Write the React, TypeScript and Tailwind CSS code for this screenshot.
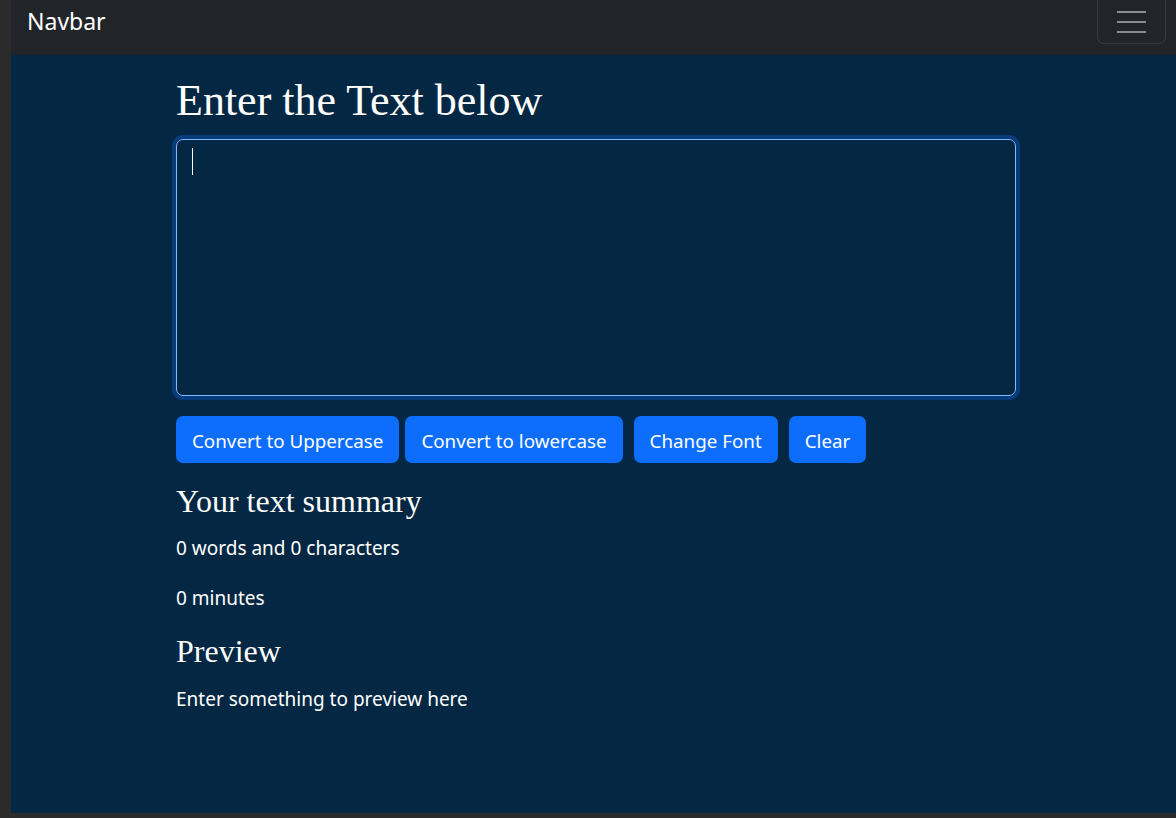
export default function App() {
  const btn =
    "h-[47px] rounded-[7px] bg-[#0d6efd] px-4 pt-[3px] text-[18.8px] leading-none text-white";

  return (
    <div className="flex h-[818px] w-[1176px] flex-col bg-[#2b2b2b] font-['Noto_Sans',sans-serif]">
      <div className="ml-[11px] flex h-[813px] flex-col">
        <nav className="flex h-[55px] items-start justify-between bg-[#212529] pr-[10px]">
          <a className="mt-[4px] ml-4 text-[23px] text-white">Navbar</a>
          <button className="flex h-[44px] w-[69px] flex-col items-center justify-center gap-[8px] rounded-b-[7px] border border-t-0 border-white/10">
            <span className="h-[2px] w-[29px] bg-[#8b8c8e]" />
            <span className="h-[2px] w-[29px] bg-[#8b8c8e]" />
            <span className="h-[2px] w-[29px] bg-[#8b8c8e]" />
          </button>
        </nav>

        <main className="flex-1 bg-[#042743] text-white">
          <div className="ml-[165px] w-[840px] pt-[19px]">
            <h1 className="mb-[12px] font-['Liberation_Serif',serif] text-[44px] leading-[53px]">
              Enter the Text below
            </h1>
            <div className="relative mb-[20px] rounded-[7px] shadow-[0_0_0_4px_rgba(13,110,253,0.3)]">
              <textarea
                className="block h-[257px] w-full resize-none rounded-[7px] border border-[#86b7fe] bg-[#042743] caret-transparent outline-none"
                defaultValue=""
              />
              <span className="absolute top-[9px] left-[16px] h-[27px] w-px bg-white" />
            </div>
            <div className="flex">
              <button className={btn}>Convert to Uppercase</button>
              <button className={`${btn} ml-[6px]`}>Convert to lowercase</button>
              <button className={`${btn} ml-[11px]`}>Change Font</button>
              <button className={`${btn} ml-[11px]`}>Clear</button>
            </div>

            <h3 className="mt-[19px] mb-[14px] font-['Liberation_Serif',serif] text-[32px] leading-[38px]">
              Your text summary
            </h3>
            <p className="mb-[21px] text-[19px] leading-[29px]">0 words and 0 characters</p>
            <p className="mb-[19px] text-[19px] leading-[29px]">0 minutes</p>
            <h3 className="mb-[15px] font-['Liberation_Serif',serif] text-[32px] leading-[38px]">
              Preview
            </h3>
            <p className="text-[19px] leading-[29px]">Enter something to preview here</p>
          </div>
        </main>
      </div>
    </div>
  );
}
